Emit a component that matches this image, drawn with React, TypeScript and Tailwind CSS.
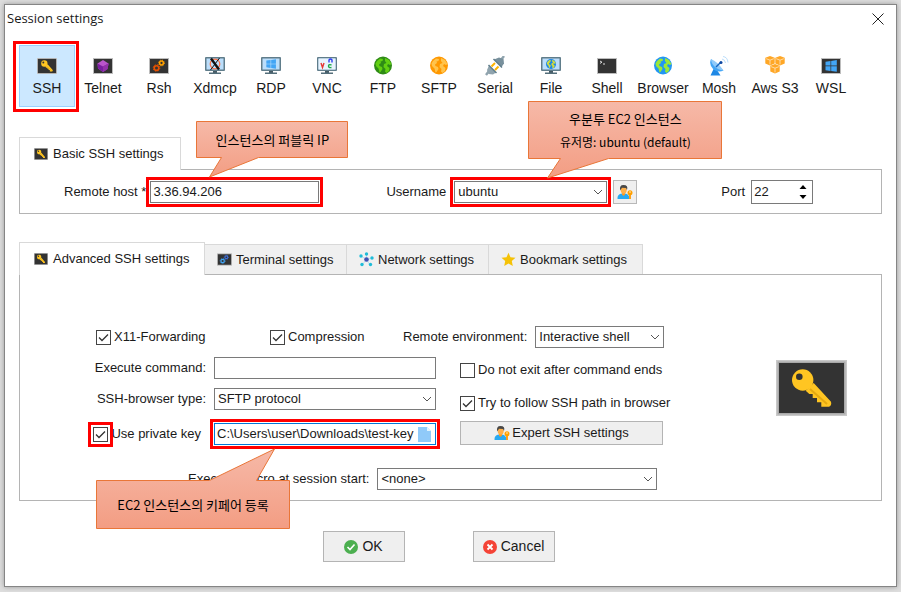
import { useId, type ReactNode } from "react";
import clsx from "clsx";

const globeLand =
  "M3 4.5 6 2l3 .5-.5 2L6.500 5l.5 1.500-2 1.500.5 1.500 2.500 1 .5 2-2 3L5.500 16l-1-4L2 9.500 1.500 7zM11 1.500l4 2 2.500 4-1.500 1-2-1-1 2 2.500 2-.5 3-2.500 2-1.500-1.500.5-2.500-2-2 .5-3 2.500-1-1.500-2z";

function KeyIcon({ className, thick }: { className: string; thick?: boolean }) {
  return (
    <svg viewBox="0 0 71 56" preserveAspectRatio="none" className={className} aria-hidden="true">
      <rect width="71" height="56" fill="#c9c9c9" />
      {thick && <rect x="1.500" y="1.500" width="68" height="53" fill="#a9a9a9" />}
      <rect x="3" y="3" width="65" height="50" fill="#333" />
      <g transform={thick ? undefined : "translate(-2 -2) scale(1.05)"}>
        <path d="M29.7 30.7 33.3 34h3.400v4H41v4.300h4.300v4.400H53q3-1.500 2-5L37.700 23z" fill="#ffc522" />
        <path d="m34 29 17 15" stroke="#e5a910" strokeWidth="2" />
        <circle cx="26.700" cy="20" r="10.700" fill="#ffc522" />
        <circle cx="23.300" cy="16.700" r="3.300" fill="#333" />
      </g>
    </svg>
  );
}

function DarkScreen({ className = "h-5 w-5", children }: { className?: string; children: ReactNode }) {
  return (
    <svg viewBox="0 0 20 20" className={className} aria-hidden="true">
      <rect x="0.500" y="2.500" width="19" height="15" fill="#333" stroke="#bdbdbd" />
      {children}
    </svg>
  );
}

function Gears({ big, small }: { big: string; small: string }) {
  return (
    <g fill="none">
      <circle cx="7.500" cy="12" r="2.300" stroke={big} strokeWidth="1.600" />
      <circle cx="7.500" cy="12" r="3.300" stroke={big} strokeWidth="1" strokeDasharray="1.300 1.300" />
      <circle cx="12.500" cy="7" r="1.900" stroke={small} strokeWidth="1.500" />
      <circle cx="12.500" cy="7" r="2.900" stroke={small} strokeWidth="1" strokeDasharray="1.100 1.200" />
    </g>
  );
}

function Monitor({ children }: { children: ReactNode }) {
  return (
    <svg viewBox="0 0 20 20" className="h-5 w-5" aria-hidden="true">
      <path d="M8 14h4v3H8z" fill="#455a64" />
      <path d="M4 16.500h12V18H4z" fill="#546e7a" />
      <rect y="1" width="20" height="14" rx="1" fill="#607d8b" />
      <rect x="1.500" y="2.500" width="17" height="11" fill="#bbdefb" />
      {children}
    </svg>
  );
}

function Globe({ sea, land }: { sea: string; land: string }) {
  return (
    <svg viewBox="0 0 20 20" className="h-5 w-5" aria-hidden="true">
      <g transform="translate(1 0.500)">
        <circle cx="9" cy="9" r="9" fill={sea} />
        <path d={globeLand} fill={land} />
      </g>
    </svg>
  );
}

function WindowsLogo() {
  return <path d="M4.500 5.700l5-.7v4.600h-5zM10.200 4.900l5.600-.8v5.500h-5.600zM4.500 10.200h5v4.700l-5-.7zM10.200 10.200h5.600v5.600l-5.600-.8z" fill="#42a5f5" />;
}

function SerialIcon() {
  return (
    <svg viewBox="0 0 20 20" className="h-5 w-5" aria-hidden="true">
      <path d="m1 19 3-4M16 4l3-4" stroke="#90a4ae" strokeWidth="2.400" />
      <path d="m4 9.500 7 7-3 2-4.500-.5L2 14z" fill="#90a4ae" />
      <path d="m9 3.500 7.500 7.500 2.500-3.500-.5-4.500L14 1.500z" fill="#78909c" />
      <path d="m3.500 9 8 8M8.500 3l8.500 8.500" stroke="#607d8b" strokeWidth="1.500" />
      <path d="m6.500 10.500 3.500-3.500M10 14l3.500-3.500" stroke="#ffb300" strokeWidth="2" />
    </svg>
  );
}

function DishIcon() {
  return (
    <svg viewBox="0 0 20 20" className="h-5 w-5" aria-hidden="true">
      <path d="m5 12-3.500 7.500h10L8 14z" fill="#1e88e5" />
      <path d="M2 3q-2.500 6 2.500 10.500 5 3.500 10 1z" fill="#42a5f5" />
      <path d="M2 3q6.500 2.500 12.500 11.500-5.500-.5-9-4T2 3z" fill="#90caf9" />
      <path d="m7 11 5-5" stroke="#1565c0" strokeWidth="1.500" />
      <circle cx="12" cy="6.500" r="1.500" fill="#0d47a1" />
      <path d="M13 3q3 .5 3.500 4M14 .5q4.500.5 5 6" fill="none" stroke="#bbdefb" />
    </svg>
  );
}

function Cube({ x, y }: { x: number; y: number }) {
  return (
    <g transform={`translate(${x} ${y})`}>
      <path d="m5 0 4.700 1.800v5.700L5 9.500.3 7.500V1.800z" fill="#ffa726" />
      <path d="M1.200 2.700 5 4.200l3.800-1.500M5 4.200v4.300" fill="none" stroke="#ffe0b2" strokeWidth="0.900" />
    </g>
  );
}

function UserKeyIcon() {
  return (
    <svg viewBox="0 0 16 16" className="h-4 w-4 shrink-0" aria-hidden="true">
      <path d="M0.500 15q-.5-5 4.500-5.500h3q4.500.5 4.500 5.500z" fill="#29a9f0" />
      <path d="M5 8h3v2.500L6.500 12 5 10.500z" fill="#f59a28" />
      <ellipse cx="6.700" cy="6" rx="3" ry="3.700" fill="#ffb04a" />
      <path d="M3.200 6.500Q2 1 6.500 1q5 0 3.500 5L9 4 5 3.800z" fill="#484848" />
      <path d="M13 10v5" stroke="#ff9800" strokeWidth="1.800" />
      <circle cx="13" cy="8.800" r="2.500" fill="#ffa000" />
      <circle cx="13" cy="8" r="0.700" fill="#fff" />
    </svg>
  );
}

const sessions: { name: string; icon: ReactNode }[] = [
  { name: "SSH", icon: <KeyIcon className="my-0.5 h-4 w-5" /> },
  {
    name: "Telnet",
    icon: (
      <DarkScreen>
        <path d="m10 4 5.500 3.500-1 5.500-4.500 3-5-3.500-.5-5z" fill="#ba55cc" />
        <path d="m4.500 7.500 5.500 3 5.500-3-1 5.500-4.500 3-5-3.500z" fill="#7b1fa2" />
        <path d="m10 10.500 5.500-3-1 5.500-4.500 3z" fill="#9332aa" />
      </DarkScreen>
    ),
  },
  { name: "Rsh", icon: <DarkScreen><Gears big="#e65100" small="#ffa000" /></DarkScreen> },
  {
    name: "Xdmcp",
    icon: (
      <Monitor>
        <circle cx="10" cy="8" r="4.800" fill="none" stroke="#ff7043" strokeWidth="1.200" />
        <path d="m6 2.500 8 11" stroke="#111" strokeWidth="2.400" />
        <path d="M14.500 2 5.500 14" stroke="#111" strokeWidth="1" />
      </Monitor>
    ),
  },
  { name: "RDP", icon: <Monitor><g transform="translate(1.500 0) scale(0.850 0.800)"><WindowsLogo /></g></Monitor> },
  {
    name: "VNC",
    icon: (
      <Monitor>
        <rect x="1.500" y="2.500" width="17" height="11" fill="#e8f4fd" />
        <path d="m4 7 1.500 4.500L7 7" fill="none" stroke="#e53935" strokeWidth="1.400" />
        <path d="M12 6.500V4q1.500-2 3 0v2.500" fill="none" stroke="#303ff0" strokeWidth="1.400" />
        <path d="M14.500 9q-3-1-3 1t3 1.500" fill="none" stroke="#1faa4b" strokeWidth="1.400" />
      </Monitor>
    ),
  },
  { name: "FTP", icon: <Globe sea="#2e8b16" land="#62cf12" /> },
  { name: "SFTP", icon: <Globe sea="#ff9800" land="#ffc44d" /> },
  { name: "Serial", icon: <SerialIcon /> },
  {
    name: "File",
    icon: (
      <Monitor>
        <g transform="translate(5 3) scale(0.560)">
          <circle cx="9" cy="9" r="9" fill="#1e88e5" />
          <path d={globeLand} fill="#d4dc3c" />
        </g>
      </Monitor>
    ),
  },
  { name: "Shell", icon: <DarkScreen><path d="m3 5 2 1.200-2 1.200M6 8h2" fill="none" stroke="#ddd" /></DarkScreen> },
  { name: "Browser", icon: <Globe sea="#2196f3" land="#9be838" /> },
  { name: "Mosh", icon: <DishIcon /> },
  {
    name: "Aws S3",
    icon: (
      <svg viewBox="0 0 20 20" className="h-5 w-5" aria-hidden="true">
        <Cube x={0} y={0} />
        <Cube x={10} y={0} />
        <Cube x={5} y={8} />
      </svg>
    ),
  },
  { name: "WSL", icon: <DarkScreen><WindowsLogo /></DarkScreen> },
];

function Callout({ className, textClass, viewBox, points, children }: {
  className: string;
  textClass: string;
  viewBox: string;
  points: string;
  children: ReactNode;
}) {
  const id = useId();
  return (
    <div className={clsx("pointer-events-none absolute z-10 font-['Noto_Sans_CJK_KR',sans-serif] text-[13px] text-black", className)}>
      <svg viewBox={viewBox} className="absolute inset-0 h-full w-full" aria-hidden="true">
        <defs>
          <linearGradient id={id} x1="0" y1="0" x2="0" y2="1">
            <stop offset="0" stopColor="#f6b9a8" />
            <stop offset="1" stopColor="#f39d83" />
          </linearGradient>
        </defs>
        <polygon points={points} fill={`url(#${id})`} stroke="#e97638" />
      </svg>
      <div className={clsx("absolute inset-x-0 flex flex-col items-center justify-center whitespace-nowrap leading-[23px]", textClass)}>
        {children}
      </div>
    </div>
  );
}

function Chevron() {
  return (
    <svg viewBox="0 0 10 6" className="pointer-events-none absolute right-1 top-2 h-1.5 w-2.5" aria-hidden="true">
      <path d="m1 1 4 4 4-4" fill="none" stroke="#555" />
    </svg>
  );
}

function Select({ id, value, className }: { id: string; value: string; className: string }) {
  return (
    <div className={clsx("relative", className)}>
      <select id={id} className="block h-[22px] w-full appearance-none border border-[#7a7a7a] bg-white pl-[3px] pr-5 leading-5">
        <option>{value}</option>
      </select>
      <Chevron />
    </div>
  );
}

function CheckBox({ id, label, checked, marked }: { id: string; label: string; checked?: boolean; marked?: boolean }) {
  return (
    <div className="flex items-center gap-[3px]">
      <span className="relative block h-[15px] w-[15px]">
        <input id={id} type="checkbox" defaultChecked={checked} className="peer block h-[15px] w-[15px] appearance-none border border-[#444] bg-white" />
        <svg viewBox="0 0 15 15" className="pointer-events-none absolute inset-0 hidden peer-checked:block" aria-hidden="true">
          <path d="m3 7.500 3 3 6-6" fill="none" stroke="#333" strokeWidth="1.300" />
        </svg>
        {marked && <span className="pointer-events-none absolute -inset-[5px] border-[3px] border-[#f00]" />}
      </span>
      <label htmlFor={id}>{label}</label>
    </div>
  );
}

const otherTabs = [
  {
    name: "Terminal settings",
    width: "w-[142px]",
    icon: <DarkScreen className="h-[15px] w-[15px]"><Gears big="#42a5f5" small="#3f6fd8" /></DarkScreen>,
  },
  {
    name: "Network settings",
    width: "w-[142px]",
    icon: (
      <svg viewBox="0 0 15 15" className="h-[15px] w-[15px]" aria-hidden="true">
        <path d="M7.500 7.500V2M7.500 7.500 2 4M7.500 7.500 13 6M7.500 7.500 3 13M7.500 7.500 11 13" stroke="#b9dff0" />
        <circle cx="7.500" cy="7.500" r="2.300" fill="#3f51b5" />
        <g fill="#1fbcd8">
          <circle cx="7.500" cy="2" r="1.700" />
          <circle cx="2" cy="4" r="1.700" />
          <circle cx="13" cy="6" r="1.700" />
          <circle cx="3" cy="12.500" r="1.700" />
          <circle cx="11.500" cy="12.500" r="1.700" />
        </g>
      </svg>
    ),
  },
  {
    name: "Bookmark settings",
    width: "w-[154px]",
    icon: (
      <svg viewBox="0 0 15 15" className="h-[15px] w-[15px]" aria-hidden="true">
        <path d="m7.500.8 2 4.500 5 .5-3.700 3.300 1 4.900-4.300-2.500L3.200 14l1-4.900L.5 5.800l5-.5z" fill="#f5c207" />
      </svg>
    ),
  },
];

export default function App() {
  return (
    <div className="min-h-screen bg-[#dedede] px-1 pb-1 pt-1 font-['Liberation_Sans',Arial,sans-serif] text-[13px] text-[#1a1a1a]">
      <main className="border border-[#858585] bg-white pb-6 shadow-[0_0_5px_#999]">
        <header className="flex h-[27px] items-center justify-between pl-0.5 pr-2.5">
          <h1 className="font-['Open_Sans',sans-serif] text-[13px]">Session settings</h1>
          <button type="button" aria-label="Close" className="p-0.5">
            <svg viewBox="0 0 12 12" className="h-3 w-3" aria-hidden="true">
              <path d="m.5.5 11 11m0-11-11 11" stroke="#222" />
            </svg>
          </button>
        </header>

        <nav className="mt-[13px] flex pl-3.5 text-[14px]">
          {sessions.map(({ name, icon }, i) => (
            <button
              key={name}
              type="button"
              className={clsx(
                "relative flex h-[62px] w-14 flex-col items-center gap-0.5 whitespace-nowrap border pt-2.5 leading-5",
                i === 0 ? "border-[#99d1ff] bg-[#cce8ff]" : "border-transparent",
              )}
            >
              {icon}
              {name}
              {i === 0 && <span className="absolute -bottom-1.5 -left-[7px] -right-[5px] -top-[5px] border-[3px] border-[#f00]" />}
            </button>
          ))}
        </nav>

        <section className="mx-3.5 mt-[30px]">
          <div className="flex">
            <button type="button" className="relative -mb-px flex h-[33px] w-[162px] items-center gap-[5px] border border-b-0 border-[#d9d9d9] bg-white pl-3.5">
              <KeyIcon className="h-3 w-3.5" />
              Basic SSH settings
            </button>
          </div>
          <div className="flex h-[45px] items-center border border-[#b4b4b4] pl-11">
            <label htmlFor="host">Remote host *</label>
            <div className="relative w-[177px] border-[3px] border-[#f00] p-px">
              <input id="host" defaultValue="3.36.94.206" className="block h-[22px] w-full border border-[#7a7a7a] px-0.5" />
              <Callout
                className="-top-[59px] left-[47px] h-[57px] w-[152px]"
                textClass="top-0 h-[37px]"
                viewBox="0 0 152 57"
                points="0.5,0.5 151.500,0.500 151.500,36.500 62.500,36.500 13.500,56 25.500,36.500 0.500,36.500"
              >
                인스턴스의 퍼블릭 IP
              </Callout>
            </div>
            <label htmlFor="user" className="ml-[63px] mr-1">Username</label>
            <div className="relative w-[161px] border-[3px] border-[#f00] p-px">
              <Select id="user" value="ubuntu" className="w-full" />
              <Callout
                className="-top-[79px] left-[75px] h-[78px] w-[194px]"
                textClass="top-0 h-[58px]"
                viewBox="0 0 194 78"
                points="0.500,0.500 193.500,0.500 193.500,57.500 80.500,57.500 19.500,77 32.500,57.500 0.500,57.500"
              >
                <span>우분투 EC2 인스턴스</span>
                <span className="text-[12px]">유저명: ubuntu (default)</span>
              </Callout>
            </div>
            <button type="button" aria-label="Manage users" className="ml-0.5 flex h-6 w-6 items-center justify-center border border-[#b8b8b8] bg-[#efefef]">
              <UserKeyIcon />
            </button>
            <label htmlFor="port" className="ml-[84px] mr-1.5">Port</label>
            <div className="flex h-6 w-[62px] items-center border border-[#7a7a7a]">
              <input id="port" inputMode="numeric" defaultValue="22" className="w-0 grow pl-0.5" />
              <div className="mr-1 flex flex-col gap-1">
                <button type="button" aria-label="Increase port">
                  <svg viewBox="0 0 10 6" className="h-1.5 w-2.5"><path d="m1.500 5 3.500-4 3.500 4z" /></svg>
                </button>
                <button type="button" aria-label="Decrease port">
                  <svg viewBox="0 0 10 6" className="h-1.5 w-2.5"><path d="m1.500 1 3.500 4 3.500-4z" /></svg>
                </button>
              </div>
            </div>
          </div>
        </section>

        <section className="mx-3.5 mt-7">
          <div className="flex items-end">
            <button type="button" className="relative -mb-px flex h-[33px] w-[186px] items-center gap-[5px] border border-b-0 border-[#d9d9d9] bg-white pl-3.5">
              <KeyIcon className="h-3 w-3.5" />
              Advanced SSH settings
            </button>
            {otherTabs.map(({ name, width, icon }) => (
              <button key={name} type="button" className={clsx("flex h-[30px] items-center gap-1 border-r border-t border-[#d9d9d9] bg-[#f0f0f0] pl-3", width)}>
                {icon}
                {name}
              </button>
            ))}
          </div>
          <div className="flex items-start justify-between border border-[#b4b4b4] pb-2.5 pr-[34px] pt-[51px]">
            <div>
              <div className="flex h-[22px] items-center pl-[76px]">
                <div className="w-[174px]"><CheckBox id="x11" label="X11-Forwarding" checked /></div>
                <div className="w-[133px]"><CheckBox id="compression" label="Compression" checked /></div>
                <label htmlFor="environment" className="mr-2">Remote environment:</label>
                <Select id="environment" value="Interactive shell" className="w-[129px]" />
              </div>

              <div className="mt-[9px] flex gap-6">
                <div className="flex w-[416px] flex-col gap-[9px]">
                  <div className="flex items-center justify-end gap-2">
                    <label htmlFor="command">Execute command:</label>
                    <input id="command" className="h-[22px] w-[222px] border border-[#7a7a7a] px-1" />
                  </div>
                  <div className="flex items-center justify-end gap-2">
                    <label htmlFor="browser">SSH-browser type:</label>
                    <Select id="browser" value="SFTP protocol" className="w-[222px]" />
                  </div>
                  <div className="-mr-1 flex items-center justify-end gap-[9px]">
                    <CheckBox id="private" label="Use private key" checked marked />
                    <div className="relative w-[230px] border-[3px] border-[#f00] p-px">
                      <div className="flex h-[22px] items-center border border-[#0078d7] bg-white pr-1">
                        <input aria-label="Private key file" defaultValue="C:\Users\user\Downloads\test-key" className="w-0 grow pl-0.5" />
                        <button type="button" aria-label="Choose file" className="ml-1">
                          <svg viewBox="0 0 13 15" className="h-[15px] w-[13px]" aria-hidden="true">
                            <path d="M0 0h9l4 4v11H0z" fill="#90caf9" />
                            <path d="M9 0v4h4z" fill="#e1f5fe" />
                          </svg>
                        </button>
                      </div>
                      <Callout
                        className="-left-[117px] top-[26px] h-[81px] w-[194px]"
                        textClass="bottom-0 h-[49px]"
                        viewBox="0 0 194 81"
                        points="0.500,32.500 113.500,32.500 178.500,1 160.500,32.500 193.500,32.500 193.500,80.500 0.500,80.500"
                      >
                        EC2 인스턴스의 키페어 등록
                      </Callout>
                    </div>
                  </div>
                </div>

                <div className="flex flex-col pt-1 leading-[18px]">
                  <CheckBox id="keep" label="Do not exit after command ends" />
                  <div className="mb-[9px] mt-[15px]"><CheckBox id="follow" label="Try to follow SSH path in browser" checked /></div>
                  <button type="button" className="flex h-6 w-[203px] items-center justify-center gap-0.5 border border-[#b4b4b4] bg-[#efefef]">
                    <UserKeyIcon />
                    Expert SSH settings
                  </button>
                </div>
              </div>

              <div className="mt-[19px] flex items-center justify-end gap-2 pr-[13px]">
                <label htmlFor="macro">Execute macro at session start:</label>
                <Select id="macro" value="<none>" className="w-[280px]" />
              </div>
            </div>
            <KeyIcon className="mt-[34px] h-14 w-[71px] shrink-0" thick />
          </div>
        </section>

        <footer className="mt-[30px] flex justify-center gap-[68px] pr-6 text-[14px]">
          <button type="button" className="flex h-[31px] w-[82px] items-center justify-center gap-1 border border-[#b4b4b4] bg-[#efefef]">
            <svg viewBox="0 0 14 14" className="h-3.5 w-3.5" aria-hidden="true">
              <circle cx="7" cy="7" r="7" fill="#4caf50" />
              <path d="m3.500 7 2.500 2.500 4.500-5" fill="none" stroke="#fff" strokeWidth="1.600" />
            </svg>
            OK
          </button>
          <button type="button" className="flex h-[31px] w-[82px] items-center justify-center gap-1 border border-[#b4b4b4] bg-[#efefef]">
            <svg viewBox="0 0 14 14" className="h-3.5 w-3.5" aria-hidden="true">
              <circle cx="7" cy="7" r="7" fill="#f44336" />
              <path d="m4.500 4.500 5 5m0-5-5 5" stroke="#fff" strokeWidth="1.800" />
            </svg>
            Cancel
          </button>
        </footer>
      </main>
    </div>
  );
}
